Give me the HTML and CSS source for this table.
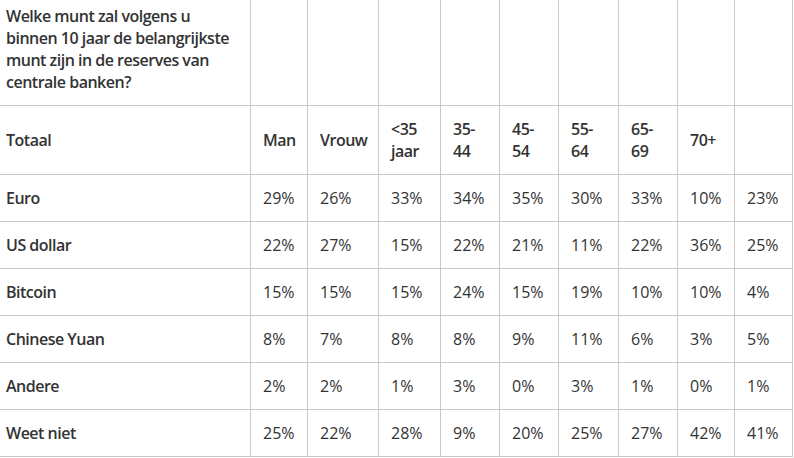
FILE: index.html
```html
<!DOCTYPE html>
<html lang="nl">
<head>
<meta charset="utf-8">
<link rel="stylesheet" href="styles.css">
</head>
<body>
<table class="survey">
  <colgroup>
    <col class="c-label">
    <col class="c57">
    <col class="c71">
    <col class="c62">
    <col class="c59">
    <col class="c59">
    <col class="c60">
    <col class="c59">
    <col class="c57">
    <col class="c58">
  </colgroup>
  <thead>
    <tr class="q-row">
      <th class="label">Welke munt zal volgens u binnen 10 jaar de belangrijkste munt zijn in de reserves van centrale banken?</th>
      <th></th><th></th><th></th><th></th><th></th><th></th><th></th><th></th><th></th>
    </tr>
    <tr>
      <th class="label">Totaal</th>
      <th>Man</th>
      <th>Vrouw</th>
      <th>&lt;35 jaar</th>
      <th>35-44</th>
      <th>45-54</th>
      <th>55-64</th>
      <th>65-69</th>
      <th>70+</th>
      <th></th>
    </tr>
  </thead>
  <tbody>
    <tr><th class="label">Euro</th><td>29%</td><td>26%</td><td>33%</td><td>34%</td><td>35%</td><td>30%</td><td>33%</td><td>10%</td><td>23%</td></tr>
    <tr><th class="label">US dollar</th><td>22%</td><td>27%</td><td>15%</td><td>22%</td><td>21%</td><td>11%</td><td>22%</td><td>36%</td><td>25%</td></tr>
    <tr><th class="label">Bitcoin</th><td>15%</td><td>15%</td><td>15%</td><td>24%</td><td>15%</td><td>19%</td><td>10%</td><td>10%</td><td>4%</td></tr>
    <tr><th class="label">Chinese Yuan</th><td>8%</td><td>7%</td><td>8%</td><td>8%</td><td>9%</td><td>11%</td><td>6%</td><td>3%</td><td>5%</td></tr>
    <tr><th class="label">Andere</th><td>2%</td><td>2%</td><td>1%</td><td>3%</td><td>0%</td><td>3%</td><td>1%</td><td>0%</td><td>1%</td></tr>
    <tr><th class="label">Weet niet</th><td>25%</td><td>22%</td><td>28%</td><td>9%</td><td>20%</td><td>25%</td><td>27%</td><td>42%</td><td>41%</td></tr>
  </tbody>
</table>
</body>
</html>
```
FILE: styles.css
```css
html, body {
  margin: 0;
  padding: 0;
  background: #ffffff;
}

body {
  overflow: hidden;
  font-family: "Open Sans", "Noto Sans", sans-serif;
  color: #333333;
}

.survey {
  margin: -8px 0 0 -7px;
  width: 800px;
  table-layout: fixed;
  border-collapse: collapse;
  font-size: 16px;
  line-height: 22px;
}

.c-label { width: 257px; }
.c57 { width: 57px; }
.c58 { width: 58px; }
.c59 { width: 59px; }
.c60 { width: 60px; }
.c62 { width: 62px; }
.c71 { width: 71px; }

.survey th,
.survey td {
  border: 1px solid #c8c8c8;
  padding: 12px 8px 12px 12px;
  text-align: left;
  vertical-align: middle;
}

.survey th {
  font-weight: 600;
  letter-spacing: -0.5px;
}

.survey td {
  font-weight: 400;
}
```
